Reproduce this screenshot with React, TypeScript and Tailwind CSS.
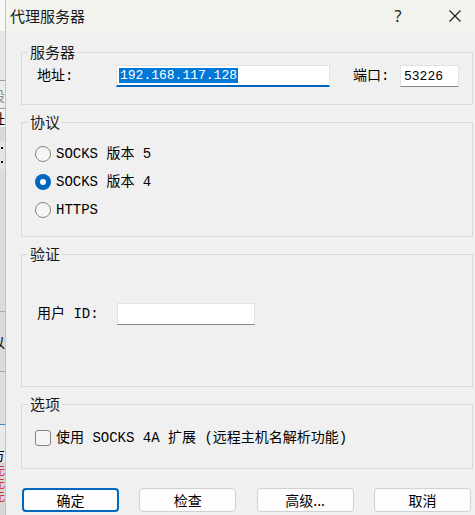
import React from "react";

const cjk = "font-['Noto_Sans_CJK_SC',sans-serif]";
const mono = "font-['Liberation_Mono','Noto_Sans_CJK_SC',monospace]";

function Group({ title, children, className = "" }: { title: string; children: React.ReactNode; className?: string }) {
  return (
    <fieldset className={`border border-[#dadada] ${className}`}>
      <legend className={`ml-[6px] px-[2px] text-[15px] leading-[20px] text-[#1a1a1a] ${cjk}`}>{title}</legend>
      {children}
    </fieldset>
  );
}

function Radio({ checked, label }: { checked?: boolean; label: string }) {
  return (
    <div className="flex items-center h-[28px]">
      {checked ? (
        <span className="w-[16px] h-[16px] rounded-full bg-[#0067c0] flex items-center justify-center">
          <span className="w-[6px] h-[6px] rounded-full bg-white" />
        </span>
      ) : (
        <span className="w-[16px] h-[16px] rounded-full border border-[#858585] bg-[#f5f5f5]" />
      )}
      <span className={`ml-[5px] text-[14px] leading-[16px] text-black ${mono}`}>{label}</span>
    </div>
  );
}

function Btn({ label, primary }: { label: string; primary?: boolean }) {
  return (
    <button
      className={`w-[97px] h-[24px] rounded-[4px] bg-[#fdfdfd] text-[14px] leading-[20px] text-black ${cjk} ${
        primary ? "border-2 border-[#0067c0]" : "border border-[#d0d0d0]"
      }`}
    >
      {label}
    </button>
  );
}

// sliver of the window behind the dialog
function LeftStrip() {
  return (
    <div className={`w-[5px] shrink-0 flex flex-col overflow-hidden bg-[#dcdcdc] text-[14px] leading-[16px] ${cjk}`}>
      <div className="h-[31px] bg-[#f7f7f7]" />
      <div className="h-[49px] bg-[#e6e6e6]" />
      <div className="h-[1px] bg-[#9a9a9a]" />
      <div className="h-[27px] bg-[#ececec] flex items-center">
        <span className="ml-[-9px] text-[#8a8a8a]">设</span>
      </div>
      <div className="h-[1px] bg-[#9a9a9a]" />
      <div className="h-[18px] bg-[#f3f3f3] flex items-center">
        <span className="ml-[-9px] text-black">址</span>
      </div>
      <div className="h-[14px] bg-[#d8d8d8]" />
      <div className="h-[14px] bg-[#e4e4e4] flex items-center pl-[1px]">
        <span className="w-[2px] h-[2px] bg-black" />
      </div>
      <div className="h-[14px] bg-[#e4e4e4] flex items-center pl-[1px]">
        <span className="w-[2px] h-[2px] bg-black" />
      </div>
      <div className="h-[142px] bg-[#dcdcdc]" />
      <div className="h-[1px] bg-[#a8a8a8]" />
      <div className="h-[59px] bg-[#dadada] flex items-center">
        <span className="ml-[-9px] text-black">以</span>
      </div>
      <div className="h-[1px] bg-[#a8a8a8]" />
      <div className="h-[52px] bg-[#dedede]" />
      <div className="h-[1px] bg-[#3c86d0]" />
      <div className="h-[37px] bg-[#e9e9e9] flex items-end">
        <span className="ml-[-9px] text-black">方</span>
      </div>
      <div className="flex-1 bg-[#d6d6d6] flex flex-col text-[11px] leading-[13px] text-[#d01010]">
        <span className="ml-[-6px] mt-[2px] h-[13px]">无</span>
        <span className="ml-[-6px] h-[13px]">无</span>
        <span className="ml-[-6px] h-[13px]">无</span>
      </div>
    </div>
  );
}

export default function App() {
  return (
    <div className="w-[475px] h-[515px] flex overflow-hidden bg-[#f0f0f0]">
      <LeftStrip />
      <div className="flex-1 flex flex-col border-l border-[#c4c4c4] min-w-0">
        {/* title bar */}
        <div className="h-[31px] shrink-0 flex items-center bg-[#f3f3ee]">
          <span className={`ml-[4px] text-[15px] leading-[20px] text-[#1a1a1a] ${cjk}`}>代理服务器</span>
          <div className="flex-1" />
          <span className="w-[20px] text-center text-[16px] leading-[20px] text-[#1a1a1a] font-['Noto_Sans',sans-serif]">?</span>
          <div className="w-[27px]" />
          <div className="w-[40px] flex justify-center">
            <svg width="12" height="12" viewBox="0 0 12 12" stroke="#1a1a1a" strokeWidth="1.1">
              <path d="M0.5 0.5 L11.5 11.5 M11.5 0.5 L0.5 11.5" />
            </svg>
          </div>
        </div>

        <div className="flex flex-col pl-[15px] pr-[2px] pt-[11px]">
          <Group title="服务器">
            <div className="flex items-center pl-[15px] pt-[3px] pb-[17px]">
              <span className={`w-[79px] text-[14px] leading-[16px] text-black ${mono}`}>地址:</span>
              <div className="w-[214px] h-[22px] bg-white border border-[#e3e3e3] border-b-2 border-b-[#0067c0] flex items-center pl-[2px]">
                <span className={`bg-[#0078d7] text-white text-[13px] leading-[15px] px-[1px] ${mono}`}>192.168.117.128</span>
              </div>
              <span className={`ml-[23px] w-[47px] text-[14px] leading-[16px] text-black ${mono}`}>端口:</span>
              <div className="w-[59px] h-[22px] bg-white border border-[#e3e3e3] border-b-[#868686] flex items-center pl-[3px]">
                <span className={`text-[13px] leading-[15px] text-black ${mono}`}>53226</span>
              </div>
            </div>
          </Group>

          <Group title="协议" className="mt-[7px]">
            <div className="flex flex-col pl-[13px] pt-[8px] pb-[12px]">
              <Radio label="SOCKS 版本 5" />
              <Radio checked label="SOCKS 版本 4" />
              <Radio label="HTTPS" />
            </div>
          </Group>

          <Group title="验证" className="mt-[7px]">
            <div className="flex items-center pl-[15px] pt-[39px] pb-[61px]">
              <span className={`w-[80px] text-[14px] leading-[16px] text-black ${mono}`}>用户 ID:</span>
              <div className="w-[138px] h-[22px] bg-white border border-[#e3e3e3] border-b-[#868686]" />
            </div>
          </Group>

          <Group title="选项" className="mt-[7px]">
            <div className="flex items-center h-[28px] mt-[10px] mb-[16px] pl-[13px]">
              <span className="w-[16px] h-[16px] rounded-[3px] border border-[#858585] bg-[#f5f5f5]" />
              <span className={`ml-[5px] text-[14px] leading-[16px] text-black ${mono}`}>
                使用 SOCKS 4A 扩展 (远程主机名解析功能)
              </span>
            </div>
          </Group>

          <div className="mt-[19px] ml-[1px] w-[449px] flex justify-between">
            <Btn label="确定" primary />
            <Btn label="检查" />
            <Btn label="高级..." />
            <Btn label="取消" />
          </div>
        </div>
      </div>
    </div>
  );
}
